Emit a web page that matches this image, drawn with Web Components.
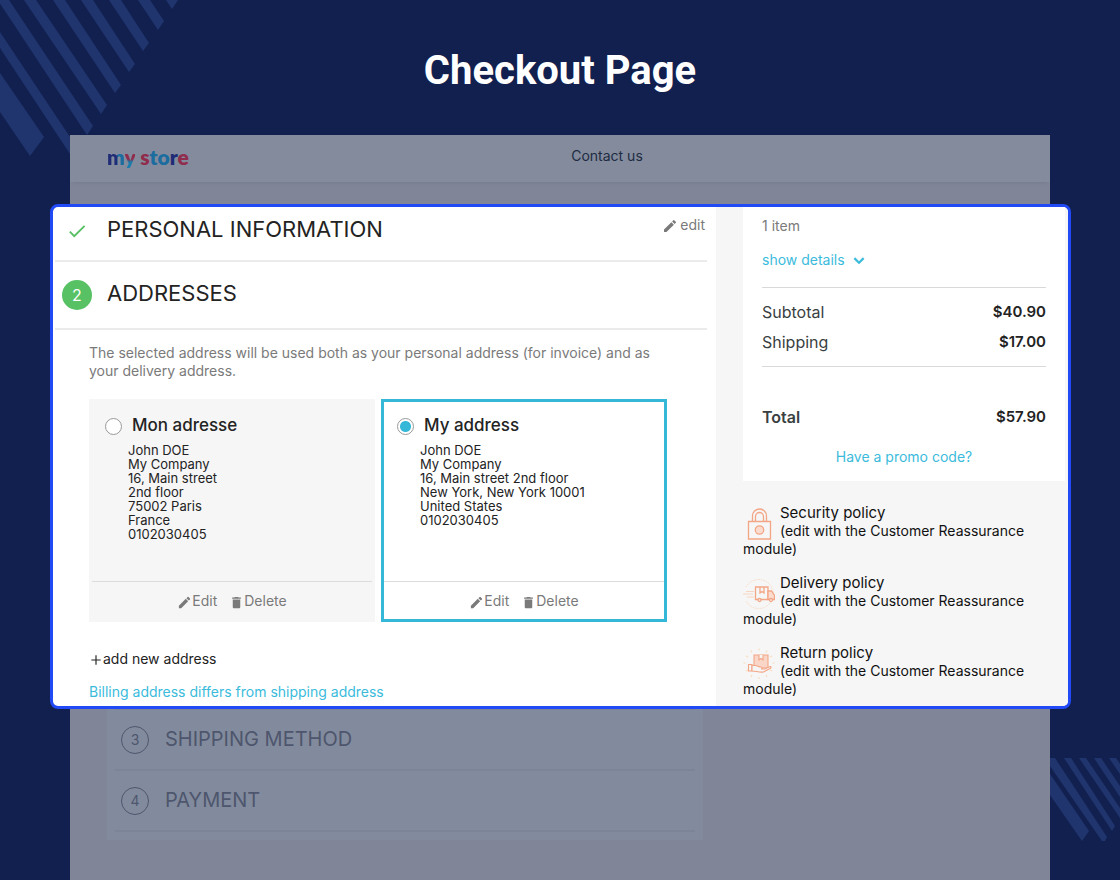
<!DOCTYPE html>
<html lang="en">
<head>
<meta charset="utf-8">
<title>Checkout Page</title>
<style>
    :root {
        --navy: #122050;
        --stripe: #20356e;
        --frame: #2149f5;
        --accent: #35b8d8;
        --link: #3bbbdc;
        --green: #57c164;
        --text: #232323;
        --muted: #7a7a7a;
        --grey: #f6f6f6;
    }

    body {
        margin: 0;
        background: var(--navy);
        color: var(--text);
        font-family: Inter, "Liberation Sans", sans-serif;
        font-size: 14px;
        line-height: 18px;
    }
</style>
</head>
<body>

<checkout-page>
    <span slot="title">Checkout Page</span>
    <store-header slot="header"></store-header>

    <focus-panel slot="panel">
        <checkout-step state="done" heading="PERSONAL INFORMATION"></checkout-step>
        <checkout-step state="current" number="2" heading="ADDRESSES"></checkout-step>
        <address-picker>
            <span slot="intro">The selected address will be used both as your personal address (for invoice) and as your delivery address.</span>
            <address-card name="Mon adresse">John DOE<br>My Company<br>16, Main street<br>2nd floor<br>75002 Paris<br>France<br>0102030405</address-card>
            <address-card name="My address" selected>John DOE<br>My Company<br>16, Main street 2nd floor<br>New York, New York 10001<br>United States<br>0102030405</address-card>
        </address-picker>

        <cart-summary slot="aside"></cart-summary>
        <policy-note slot="aside" heading="Security policy" icon="lock"></policy-note>
        <policy-note slot="aside" heading="Delivery policy" icon="truck"></policy-note>
        <policy-note slot="aside" heading="Return policy" icon="parcel"></policy-note>
    </focus-panel>

    <checkout-step slot="next" state="pending" number="3" heading="SHIPPING METHOD"></checkout-step>
    <checkout-step slot="next" state="pending" number="4" heading="PAYMENT"></checkout-step>
</checkout-page>

<script>
const icons = {
    check: `<svg viewBox="0 0 24 24"><path fill="currentColor" d="M9 16.2 4.8 12l-1.4 1.4L9 19 21 7l-1.4-1.4z"/></svg>`,
    pencil: `<svg viewBox="0 0 24 24"><path fill="currentColor" d="M3 17.25V21h3.75L17.81 9.94l-3.75-3.75zM20.71 7.04a1 1 0 0 0 0-1.41l-2.34-2.34a1 1 0 0 0-1.41 0l-1.83 1.83 3.75 3.75z"/></svg>`,
    trash: `<svg viewBox="0 0 24 24"><path fill="currentColor" d="M6 19c0 1.1.9 2 2 2h8c1.1 0 2-.9 2-2V7H6zM19 4h-3.500l-1-1h-5l-1 1H5v2h14z"/></svg>`,
    chevron: `<svg viewBox="0 0 24 24"><path fill="currentColor" d="M7.400 8.800 12 13.400l4.600-4.600L18.500 10.700 12 17.200 5.500 10.700z"/></svg>`,
    plus: `<svg viewBox="0 0 24 24"><path fill="currentColor" d="M20 13h-7v7h-2v-7H4v-2h7V4h2v7h7z"/></svg>`,
    lock: `<svg viewBox="0 0 32 32" fill="none" stroke="#f3a686" stroke-width="1.300">
        <path d="M5.500 13.500h22v17.500h-22z"/>
        <path d="M9.500 13.500V8a7 7 0 0 1 14 0v5.500M12.500 13.500V8.500a4 4 0 0 1 8 0v5"/>
        <circle cx="16.500" cy="22" r="4.200" fill="#fbdccf"/>
    </svg>`,
    truck: `<svg viewBox="0 0 32 32" fill="none" stroke="#f3a686" stroke-width="1.300">
        <path stroke="#f8dac4" stroke-dasharray="1.500 1" stroke-width="1" d="M3 9a14.500 14.500 0 1 1 0 14"/>
        <path stroke="#f6d6c2" stroke-width="1" d="M3 13.500h8M0 16h10M4 19h7"/>
        <path fill="#f6f6f6" d="M12.500 9h12.500v12.500H12.500z"/>
        <path d="M17 9v6l2-1.500 2 1.500V9"/>
        <path fill="#fbdccf" d="M25 13h3.500l3 4.500v4H25z"/>
        <circle cx="16.500" cy="22" r="1.500" fill="#f6f6f6"/>
        <circle cx="28" cy="22" r="1.500" fill="#f6f6f6"/>
    </svg>`,
    parcel: `<svg viewBox="0 0 32 32" fill="none" stroke="#f3a686" stroke-width="1.100">
        <path stroke="#f8dcbd" d="M16 .5v2M8 2.500l1 2M24 2.500l-1 2M3 8l2 1M29 8l-2 1M.5 15h2M29.500 15h2M3 23l2-1M29 23l-2-1M8 29l1-2M24 29l-1-2M16 31v-2"/>
        <path fill="#fad6c8" d="M11 7h14v13H11z"/>
        <path fill="#f6f6f6" d="M16 7v5l2-1.500 2 1.500V7"/>
        <path fill="#f6f6f6" d="M5.500 16.500H9v6.500H5.500z"/>
        <path fill="#f6f6f6" d="M9 17.500h3.500c2 0 3 1.500 5.500 1.500 1.500 0 1.500 2 0 2h4l5-2.500c1-.2 1.500 1 .5 1.800L20.500 24c-3.500.8-8-1-11.500-1z"/>
    </svg>`
};

function define(name, html, setup) {
    const template = document.createElement('template');
    template.innerHTML = html;

    window.customElements.define(name, class extends HTMLElement {
        constructor() {
            super();
            this.attachShadow({ mode: 'open' });
            this.shadowRoot.appendChild(template.content.cloneNode(true));
        }

        connectedCallback() {
            if (setup) setup(this, this.shadowRoot);
        }
    });
}

define('ui-icon', `
    <style>
        :host { display:inline-block; width:16px; height:16px; flex:none; }
        svg { display:block; width:100%; height:100%; }
    </style>
    <span></span>
`, (host, root) => {
    root.querySelector('span').innerHTML = icons[host.getAttribute('name')];
});

define('checkout-page', `
    <style>
        :host {
            display:flex;
            flex-direction:column;
            min-height:100vh;
            position:relative;
            overflow:hidden;
        }
        .stripes { position:absolute; fill:var(--stripe); }
        .top { left:0; top:0; width:180px; height:160px; }
        .bottom { right:0; bottom:0; width:70px; height:122px; }
        h1 {
            position:relative;
            margin:0;
            padding:47px 20px 40px;
            font:700 40px/48px Roboto, sans-serif;
            color:white;
            text-align:center;
        }
        .shell {
            position:relative;
            flex:1;
            display:flex;
            flex-direction:column;
            margin:0 70px;
            background:#808598;
        }
        .next {
            margin:0 347px 40px 37px;
            padding:0 8px 8px;
            background:#828b9d;
        }
        .next::before { content:""; display:block; height:1px; background:#7c8497; }
    </style>

    <svg class="stripes top" viewBox="0 0 180 160">
        <path d="M0 73 44 137 30 156 0 112zM0 32 76 146 70 154 0 48zM-1 0H9L93 126 87 135-1 2zM24 0h12l71 105-6 9zM53 0h12l56 85-6 8zM81 0h12l42 64-6 8zM109 0h12l28 43-6 8zM138 0h12l14 21-6 9zM166 0h12l-6 9z"/>
    </svg>
    <svg class="stripes bottom" viewBox="0 0 70 122">
        <path d="M0 16 39 73 32 83 0 37zM0 0h5L57 79l-2 4-3 0L0 8zM14 0h7l44 68-3 5zM29 0h7l34 50v10zM44 0h7l19 28v11zM59 0h7l4 6v10z"/>
    </svg>

    <h1><slot name="title"></slot></h1>
    <div class="shell">
        <slot name="header"></slot>
        <slot name="panel"></slot>
        <div class="next"><slot name="next"></slot></div>
    </div>
`);

define('store-header', `
    <style>
        :host { display:block; margin-bottom:22px; }
        header {
            display:grid;
            grid-template-columns:1fr auto 1fr;
            align-items:center;
            height:47px;
            padding:0 37px;
            background:#838b9d;
            box-shadow:0 4px 3px -3px #757b8e;
        }
        a { text-decoration:none; color:#1e2b42; }
        .logo {
            padding-bottom:4px;
            font:800 21px/24px Lato, sans-serif;
            color:#1b6c9f;
        }
        .m { background:linear-gradient(90deg, #202c76 55%, #1b6c9f 60%); }
        .y { background:linear-gradient(#912d4c 60%, #1b7cab 72%); }
        .m, .y { -webkit-background-clip:text; background-clip:text; color:transparent; }
        .navy { color:#202c76; }
        .red { color:#912d4c; }
        .contact { padding:0 0 6px 94px; }
    </style>

    <header>
        <a class="logo" href="#"><span class="m">m</span><span class="y">y</span> <span class="red">s</span><span>to</span><span class="navy">r</span><span class="red">e</span></a>
        <a class="contact" href="#">Contact us</a>
    </header>
`);

define('focus-panel', `
    <style>
        :host {
            display:grid;
            grid-template-columns:minmax(0, 1fr) 352px;
            margin:0 -21px 0 -20px;
            border:3px solid var(--frame);
            border-radius:8px;
            background:white;
            overflow:hidden;
        }
        .main { padding:0 9px 5px 2px; }
        aside { padding:0 3px 6px 27px; background:var(--grey); }
    </style>

    <div class="main"><slot></slot></div>
    <aside><slot name="aside"></slot></aside>
`);

define('checkout-step', `
    <style>
        :host { display:block; }
        section {
            display:flex;
            align-items:center;
            height:66px;
            padding:0 2px 0 7px;
            border-bottom:2px solid #ebebeb;
        }
        .mark {
            box-sizing:border-box;
            display:flex;
            align-items:center;
            justify-content:center;
            width:30px;
            height:30px;
            margin-right:15px;
            border-radius:50%;
            font-size:16px;
        }
        h2 {
            flex:1;
            margin:0;
            padding-bottom:4px;
            font-size:22px;
            line-height:28px;
            font-weight:400;
        }
        button {
            display:flex;
            align-items:center;
            gap:2px;
            padding:0;
            border:0;
            background:none;
            font:inherit;
            color:var(--muted);
            cursor:pointer;
        }
        button ui-icon { margin-top:2px; }
        .done { height:47px; padding-bottom:6px; }
        .done .mark { color:var(--green); }
        .done .mark ui-icon { width:22px; height:22px; }
        .done button { margin-bottom:12px; }
        .current .mark { background:var(--green); color:white; }
        .pending {
            height:59px;
            padding-left:6px;
            border-color:#7c8497;
            color:#4e566d;
        }
        .pending .mark { width:28px; height:28px; margin-right:16px; border:1px solid; font-size:14px; }
        .pending h2 { padding-bottom:2px; font-size:20px; }
    </style>

    <section>
        <span class="mark"></span>
        <h2></h2>
    </section>
`, (host, root) => {
    const state = host.getAttribute('state');
    const section = root.querySelector('section');
    section.className = state;
    root.querySelector('h2').textContent = host.getAttribute('heading');
    root.querySelector('.mark').textContent = host.getAttribute('number');

    if (state === 'done') {
        root.querySelector('.mark').innerHTML = '<ui-icon name="check"></ui-icon>';
        section.insertAdjacentHTML('beforeend', '<button type="button"><ui-icon name="pencil"></ui-icon>edit</button>');
    }
});

define('address-picker', `
    <style>
        :host { display:block; padding:14px 40px 0 34px; }
        p { margin:0 0 19px; color:var(--muted); }
        .cards {
            display:grid;
            grid-template-columns:1fr 1fr;
            gap:6px;
            margin-bottom:28px;
        }
        a {
            display:flex;
            align-items:center;
            margin-bottom:15px;
            text-decoration:none;
            color:var(--text);
        }
        a ui-icon { width:14px; height:14px; margin-top:2px; }
        .billing { margin:0; color:var(--link); }
    </style>

    <p><slot name="intro"></slot></p>
    <div class="cards"><slot></slot></div>
    <a href="#"><ui-icon name="plus"></ui-icon>add new address</a>
    <a class="billing" href="#">Billing address differs from shipping address</a>
`, host => {
    host.addEventListener('address-selected', event => {
        host.querySelectorAll('address-card').forEach(card => card.toggle(card === event.target));
    });
});

const addressCardTemplate = document.createElement('template');

addressCardTemplate.innerHTML = `
    <style>
        :host {
            display:flex;
            flex-direction:column;
            border:3px solid var(--grey);
            background:var(--grey);
        }
        :host([selected]) { border-color:var(--accent); background:white; }
        label {
            display:grid;
            grid-template-columns:16px 1fr;
            grid-template-rows:auto 1fr;
            column-gap:11px;
            align-items:center;
            flex:1;
            min-height:179px;
            padding:12px 13px 0;
            box-sizing:border-box;
        }
        .name { font-size:17px; line-height:22px; font-weight:500; }
        .lines {
            grid-column:1 / -1;
            align-self:start;
            padding:7px 0 0 23px;
            font-size:13px;
            line-height:14px;
        }
        input {
            appearance:none;
            box-sizing:border-box;
            width:17px;
            height:17px;
            margin:3px 0 0;
            border:1px solid #999;
            border-radius:50%;
            background:white;
        }
        input:checked { background:radial-gradient(circle, var(--accent) 5px, white 6px); }
        footer {
            display:flex;
            justify-content:center;
            gap:12px;
            padding:10px 0 9px;
            border-top:1px solid #dcdcdc;
        }
        button {
            display:flex;
            align-items:center;
            padding:0;
            border:0;
            background:none;
            font:inherit;
            color:var(--muted);
            cursor:pointer;
        }
        ui-icon { width:15px; height:15px; margin-top:3px; }
    </style>

    <label>
        <input type="radio" name="address">
        <span class="name"></span>
        <span class="lines"><slot></slot></span>
    </label>
    <footer>
        <button type="button"><ui-icon name="pencil"></ui-icon>Edit</button>
        <button type="button"><ui-icon name="trash"></ui-icon>Delete</button>
    </footer>
`;

class AddressCard extends HTMLElement {
    constructor() {
        super();
        this.attachShadow({ mode: 'open' });
        this.shadowRoot.appendChild(addressCardTemplate.content.cloneNode(true));
    }

    toggle(selected) {
        this.toggleAttribute('selected', selected);
        this.shadowRoot.querySelector('input').checked = selected;
    }

    connectedCallback() {
        this.shadowRoot.querySelector('.name').textContent = this.getAttribute('name');
        this.toggle(this.hasAttribute('selected'));
        this.shadowRoot.querySelector('input').addEventListener('change', () => {
            this.dispatchEvent(new CustomEvent('address-selected', { bubbles: true }));
        });
    }
}

window.customElements.define('address-card', AddressCard);

define('cart-summary', `
    <style>
        :host {
            display:block;
            margin-bottom:23px;
            padding:10px 19px 15px;
            background:white;
        }
        p { margin:0; color:var(--muted); }
        a { color:var(--link); text-decoration:none; }
        .details { display:flex; align-items:center; gap:4px; margin:15px 0 17px; }
        .details ui-icon { width:20px; height:20px; }
        table {
            width:100%;
            border-collapse:collapse;
            border-top:1px solid #d9d9d9;
            font-size:16px;
        }
        th { padding:0; font-weight:400; text-align:left; color:#3a3f42; }
        td { padding:0; font-size:15px; font-weight:600; text-align:right; }
        tr { height:39px; }
        tbody { border-bottom:1px solid #d9d9d9; }
        .first td, .first th { padding-top:9px; }
        .last { height:40px; }
        .last td, .last th { padding-bottom:8px; }
        tfoot tr { height:100px; }
        tfoot th { font-weight:600; }
        .promo { display:block; text-align:center; margin-top:-19px; }
    </style>

    <p>1 item</p>
    <a class="details" href="#">show details <ui-icon name="chevron"></ui-icon></a>
    <table>
        <tbody>
            <tr class="first"><th scope="row">Subtotal</th><td>$40.90</td></tr>
            <tr class="last"><th scope="row">Shipping</th><td>$17.00</td></tr>
        </tbody>
        <tfoot>
            <tr><th scope="row">Total</th><td>$57.90</td></tr>
        </tfoot>
    </table>
    <a class="promo" href="#">Have a promo code?</a>
`);

define('policy-note', `
    <style>
        :host { display:block; margin-bottom:16px; color:#111; }
        :host(:last-of-type) { margin-bottom:0; }
        ui-icon { float:left; width:32px; height:32px; margin:4px 5px 0 0; }
        .heading { font-size:15px; }
    </style>

    <ui-icon></ui-icon>
    <span class="heading"></span><br>
    <span>(edit with the Customer Reassurance module)</span>
`, (host, root) => {
    const icon = document.createElement('ui-icon');
    icon.setAttribute('name', host.getAttribute('icon'));
    root.querySelector('ui-icon').replaceWith(icon);
    root.querySelector('.heading').textContent = host.getAttribute('heading');
});
</script>
</body>
</html>
